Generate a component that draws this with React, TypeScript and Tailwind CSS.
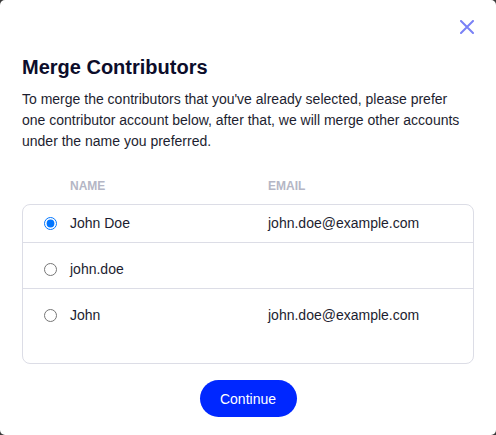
import React, { useState } from "react";

const rows = [
  { name: "John Doe", email: "john.doe@example.com", cls: "h-[38px] items-center pb-px" },
  { name: "john.doe", email: "", cls: "h-[46px] items-start pt-[16px]" },
  { name: "John", email: "john.doe@example.com", cls: "flex-1 items-start pt-[16px]" },
];

export default function App() {
  const [sel, setSel] = useState(0);
  return (
    <div className="w-[496px] h-[435px] bg-[#3a3a3a]" style={{ fontFamily: '"Liberation Sans", Arial, sans-serif' }}>
      <div className="w-full h-full bg-white rounded-[5px] px-[22px] flex flex-col">
        <div className="flex justify-end pt-[20px]">
          <button className="w-[14px] h-[14px] flex items-center justify-center">
            <svg width="14" height="14" viewBox="0 0 14 14" fill="none">
              <path d="M1 1L13 13M13 1L1 13" stroke="#7a82f6" strokeWidth="2" strokeLinecap="round" />
            </svg>
          </button>
        </div>
        <h2 className="mt-[19px] text-[20px] leading-[28px] font-bold text-[#0c0d2b]">Merge Contributors</h2>
        <p className="mt-[8px] w-[445px] text-[14px] leading-[21px] text-[#1d1e30]">
          To merge the contributors that you've already selected, please prefer one contributor account below, after that, we will merge other accounts under the name you preferred.
        </p>
        <div className="mt-[26px] flex pl-[48px] text-[12px] leading-[16px] font-bold uppercase text-[#b4b6c5]">
          <div className="w-[198px]">Name</div>
          <div>Email</div>
        </div>
        <div className="mt-[10px] h-[160px] border border-[#dcdde6] rounded-[8px] flex flex-col">
          {rows.map((r, i) => (
            <label
              key={i}
              className={`flex ${r.cls} ${i < rows.length - 1 ? "border-b border-[#dcdde6]" : ""} text-[14px] leading-[20px] text-[#1c1d30] cursor-pointer`}
            >
              <div className="w-[47px] pl-[21px] h-[20px] flex items-center">
                <input
                  type="radio"
                  name="contrib"
                  checked={sel === i}
                  onChange={() => setSel(i)}
                  className="m-0 w-[13px] h-[13px]"
                />
              </div>
              <div className="w-[198px]">{r.name}</div>
              <div>{r.email}</div>
            </label>
          ))}
        </div>
        <div className="mt-[16px] flex justify-center">
          <button className="h-[37px] w-[97px] rounded-full bg-[#0027ff] text-white text-[14px] leading-[20px]">
            Continue
          </button>
        </div>
      </div>
    </div>
  );
}
